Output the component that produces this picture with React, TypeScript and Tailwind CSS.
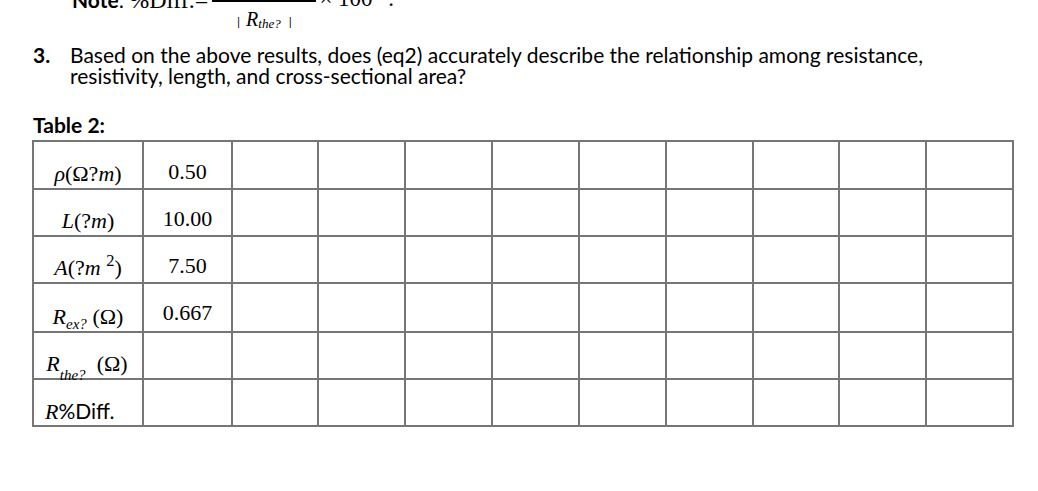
import React from "react";

const serif = "[font-family:'Liberation_Serif',serif]";
const sans = "[font-family:Lato,sans-serif]";

const labels: React.ReactNode[] = [
  <span>
    <i>ρ</i>(Ω?<i>m</i>)
  </span>,
  <span>
    <i>L</i>(?<i>m</i>)
  </span>,
  <span>
    <i>A</i>(?<i>m</i> <sup className="top-[-0.55em]">2</sup>)
  </span>,
  <span>
    <i>R</i>
    <sub className="bottom-[-0.3em] text-[15px]">
      <i>ex?</i>
    </sub>{" "}
    (Ω)
  </span>,
  <span className="whitespace-pre">
    <i>R</i>
    <sub className="bottom-[-0.6em] text-[15px]">
      <i>the?</i>
    </sub>
    {"  "}(Ω)
  </span>,
  <span>
    <i>R</i>
    <span className={`${sans} not-italic text-[21px]`}>%Diff.</span>
  </span>,
];

const values = ["0.50", "10.00", "7.50", "0.667", "", ""];

export default function App() {
  return (
    <div className="w-[1038px] h-[491px] bg-white text-black overflow-hidden">
      {/* Note / formula strip (mostly cut off at the top) */}
      <div className="flex items-start h-[44px] pl-[72px]">
        <div className="flex items-baseline -mt-[12px] whitespace-pre">
          <span className={`${sans} font-bold text-[21px] leading-[21px]`}>Note</span>
          <span className={`${sans} text-[21px] leading-[21px]`}>: </span>
          <span className={`${serif} text-[24px] leading-[24px]`}>%Diff.=</span>
        </div>
        <div className="ml-[4px] -mt-[24px] flex w-[104px] flex-col items-center">
          <div className={`${serif} h-[24px] text-[20px] leading-[24px] whitespace-pre`}>
            |<i>R</i>
            <sub className="text-[13px]"><i>ex?</i></sub> − <i>R</i>
            <sub className="text-[13px]"><i>the?</i></sub>|
          </div>
          <div className="h-[1.5px] w-full bg-black" />
          <div className={`mt-[6px] flex items-baseline ${serif} text-[20px] leading-[22px] whitespace-pre`}>
            <span className={`${sans} text-[12px] mr-[6px]`}>|</span>
            <i>R</i>
            <sub className="text-[13px] bottom-[-0.2em]">
              <i>the?</i>
            </sub>
            <span className={`${sans} text-[12px] ml-[8px]`}>|</span>
          </div>
        </div>
        <div className={`ml-[3px] -mt-[13px] flex items-baseline whitespace-pre ${serif} text-[23px] leading-[24px]`}>
          <span>× 100</span>
          <sup className="text-[14px] top-[-1.2em]">%</sup>
          <span className="ml-[4px]">.</span>
        </div>
      </div>

      {/* Question 3 */}
      <div className={`flex pl-[33px] ${sans} text-[21px] leading-[21px]`}>
        <span className="w-[37px] font-bold">3.</span>
        <span className="whitespace-nowrap">
          Based on the above results, does (eq2) accurately describe the relationship among resistance,
          <br />
          resistivity, length, and cross-sectional area?
        </span>
      </div>

      <div className={`mt-[28px] pl-[33px] ${sans} text-[21px] leading-[21px] font-bold`}>Table 2:</div>

      {/* Table */}
      <div className="ml-[32px] mt-[5px] grid w-fit grid-cols-[110px_89px_86px_87px_87px_87px_87px_87px_86px_87px_87px] grid-rows-[48px_47px_47px_49px_47px_47px] border-l-2 border-t-2 border-[#767676]">
        {labels.map((label, r) => (
          <React.Fragment key={r}>
            <div
              className={`flex items-end border-r-2 border-b-2 border-[#767676] ${serif} text-[22px] leading-[22px] ${
                r === 5 ? "justify-start pl-[11px] pb-[2px]" : "justify-center pb-[3px]"
              } ${r === 4 ? "pr-[2px]" : ""}`}
            >
              {label}
            </div>
            <div
              className={`flex items-end justify-center border-r-2 border-b-2 border-[#767676] ${serif} text-[22px] leading-[22px] ${
                r === 3 ? "pb-[7px]" : "pb-[5px]"
              }`}
            >
              {values[r]}
            </div>
            {Array.from({ length: 9 }).map((_, c) => (
              <div key={c} className="border-r-2 border-b-2 border-[#767676]" />
            ))}
          </React.Fragment>
        ))}
      </div>
    </div>
  );
}
